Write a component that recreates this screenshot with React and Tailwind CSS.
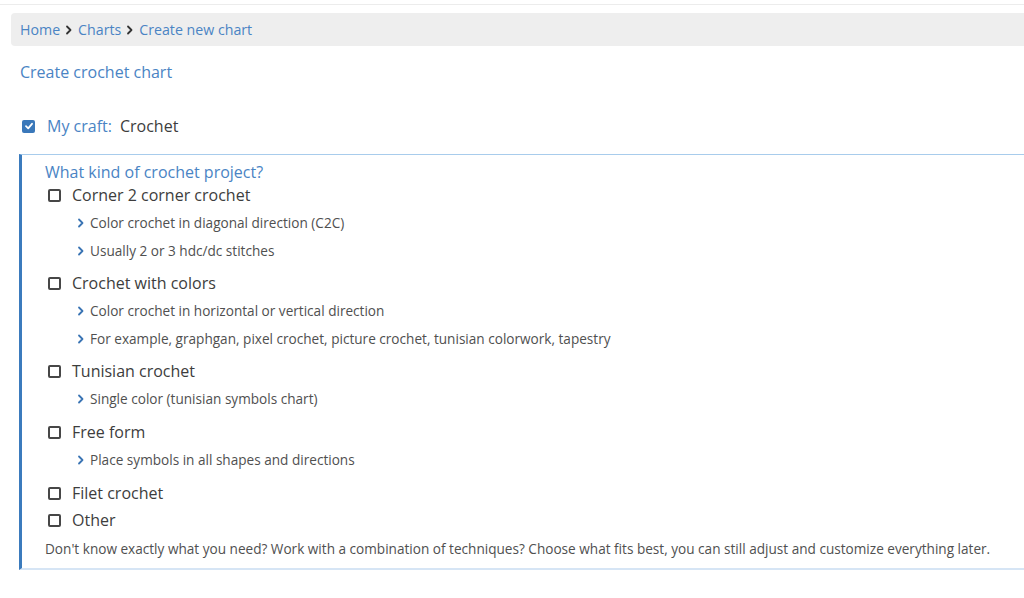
import React from "react";

const Chevron = ({ className = "" }) => (
  <svg width="8" height="10" viewBox="0 0 8 10" className={className}>
    <path d="M2 1.5 L5.5 5 L2 8.5" fill="none" stroke="currentColor" strokeWidth="1.8" strokeLinecap="round" strokeLinejoin="round" />
  </svg>
);

const Box = () => (
  <span className="inline-block w-[13px] h-[13px] border-2 border-[#474747] rounded-[2px] bg-white shrink-0" />
);

const Main = ({ label, className = "" }) => (
  <div className={"flex items-center h-[24px] pl-[3px] " + className}>
    <Box />
    <span className="ml-[11px] text-[16px] text-[#3d3d3d]">{label}</span>
  </div>
);

const Sub = ({ text }) => (
  <div className="flex items-center h-[28px] pl-[32px]">
    <Chevron className="text-[#3a74b4]" />
    <span className="ml-[5px] text-[13.6px] text-[#505050]">{text}</span>
  </div>
);

export default function App() {
  return (
    <div className="w-[1024px] h-[598px] bg-white overflow-hidden" style={{ fontFamily: '"Open Sans", "Noto Sans", sans-serif' }}>
      <div className="h-[5px] border-b border-[#ececec]" />
      <div className="ml-[11px] mt-[8px] h-[33px] bg-[#eeeeee] rounded-l-[4px] flex items-center pl-[9px] text-[14.2px] text-[#4a84c4]">
        <span>Home</span>
        <Chevron className="text-[#333] mx-[5px]" />
        <span>Charts</span>
        <Chevron className="text-[#333] mx-[5px]" />
        <span>Create new chart</span>
      </div>
      <div className="ml-[20px] mt-[15px] h-[22px] flex items-center text-[16px] text-[#4a84c4]">Create crochet chart</div>
      <div className="ml-[22px] mt-[32px] h-[22px] flex items-center text-[16px]">
        <span className="w-[13px] h-[13px] rounded-[2px] bg-[#3a78ba] flex items-center justify-center">
          <svg width="10" height="10" viewBox="0 0 10 10">
            <path d="M2 5.2 L4.2 7.3 L8 2.8" fill="none" stroke="white" strokeWidth="1.8" strokeLinecap="round" strokeLinejoin="round" />
          </svg>
        </span>
        <span className="ml-[12px] text-[#4a84c4]">My craft:</span>
        <span className="ml-[8px] text-[#3d3d3d]">Crochet</span>
      </div>
      <div className="ml-[19px] mt-[17px] border-l-[3px] border-l-[#3b7bbd] border-t border-t-[#a8ccec] border-b-2 border-b-[#d6e5f5] pl-[23px] pt-[6px] h-[416px]">
        <div className="h-[22px] flex items-center text-[16px] text-[#4a84c4]">What kind of crochet project?</div>
        <Main label="Corner 2 corner crochet" />
        <div className="mt-[2px]" />
        <Sub text="Color crochet in diagonal direction (C2C)" />
        <Sub text="Usually 2 or 3 hdc/dc stitches" />
        <Main label="Crochet with colors" className="mt-[6px]" />
        <div className="mt-[2px]" />
        <Sub text="Color crochet in horizontal or vertical direction" />
        <Sub text="For example, graphgan, pixel crochet, picture crochet, tunisian colorwork, tapestry" />
        <Main label="Tunisian crochet" className="mt-[6px]" />
        <div className="mt-[2px]" />
        <Sub text="Single color (tunisian symbols chart)" />
        <Main label="Free form" className="mt-[7px]" />
        <div className="mt-[2px]" />
        <Sub text="Place symbols in all shapes and directions" />
        <Main label="Filet crochet" className="mt-[7px]" />
        <Main label="Other" className="mt-[3px]" />
        <div className="mt-[5px] h-[24px] flex items-center text-[13.6px] text-[#505050]">
          Don't know exactly what you need? Work with a combination of techniques? Choose what fits best, you can still adjust and customize everything later.
        </div>
      </div>
    </div>
  );
}
